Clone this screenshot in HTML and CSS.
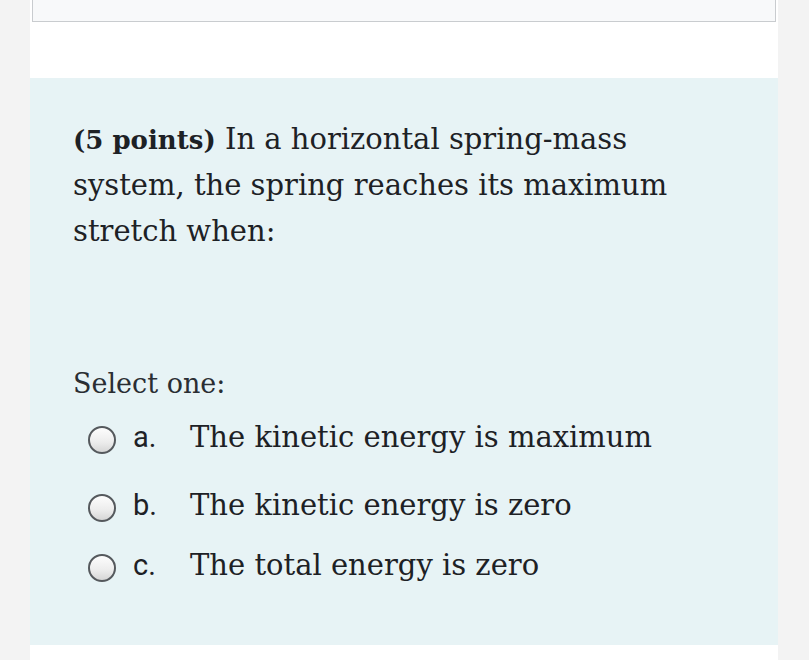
FILE: index.html
```html
<!DOCTYPE html>
<html>
<head>
<meta charset="utf-8">
<link rel="stylesheet" href="styles.css">
</head>
<body>
<div class="page">
  <div class="prev-box"></div>
  <div class="question">
    <p class="qtext"><strong>(5 points)</strong> In a horizontal spring-mass system, the spring reaches its maximum stretch when:</p>
    <div class="prompt">Select one:</div>
    <div class="answers">
      <div class="answer first"><span class="radio"></span><span class="letter">a.</span><span class="atext">The kinetic energy is maximum</span></div>
      <div class="answer"><span class="radio"></span><span class="letter">b.</span><span class="atext">The kinetic energy is zero</span></div>
      <div class="answer"><span class="radio"></span><span class="letter">c.</span><span class="atext">The total energy is zero</span></div>
    </div>
  </div>
  <div class="after"></div>
</div>
</body>
</html>
```
FILE: styles.css
```css
html, body {
  margin: 0;
  padding: 0;
  background: #f3f3f3;
  height: 660px;
  overflow: hidden;
}
.page {
  margin: 0 31px 0 30px;
  background: #ffffff;
  height: 660px;
  display: flex;
  flex-direction: column;
}
.prev-box {
  height: 21px;
  margin: 0 2px;
  border: 1px solid #c9cccf;
  border-top: none;
  background: #f8f9fa;
  flex: none;
}
.question {
  margin-top: 56px;
  height: 567px;
  flex: none;
  background: #e7f3f5;
  padding: 38px 40px 0 43px;
  box-sizing: border-box;
  color: #1d2125;
}
.qtext {
  margin: 0;
  font-family: "DejaVu Serif", serif;
  font-size: 29px;
  line-height: 46px;
  width: 610px;
}
.qtext strong {
  font-weight: bold;
  font-size: 26px;
  line-height: 40px;
}
.prompt {
  margin-top: 110px;
  font-family: "DejaVu Serif", serif;
  font-size: 27px;
  line-height: 40px;
  color: #2a2e33;
}
.answers {
  margin-top: 16px;
  padding-left: 15px;
  display: flex;
  flex-direction: column;
  gap: 20px;
}
.answer {
  display: flex;
  align-items: center;
  height: 40px;
}
.answer.first {
  margin-bottom: 8px;
}
.radio {
  width: 24px;
  height: 24px;
  border: 2px solid #55595d;
  border-radius: 50%;
  background: linear-gradient(180deg, #fdfdfd 0%, #ececec 60%, #d6d6d6 100%);
  flex: none;
}
.letter {
  font-family: Roboto, "Liberation Sans", sans-serif;
  font-size: 29px;
  width: 57px;
  margin-left: 17px;
  padding-bottom: 6px;
}
.atext {
  font-family: "DejaVu Serif", serif;
  font-size: 29px;
  padding-bottom: 6px;
}
```
